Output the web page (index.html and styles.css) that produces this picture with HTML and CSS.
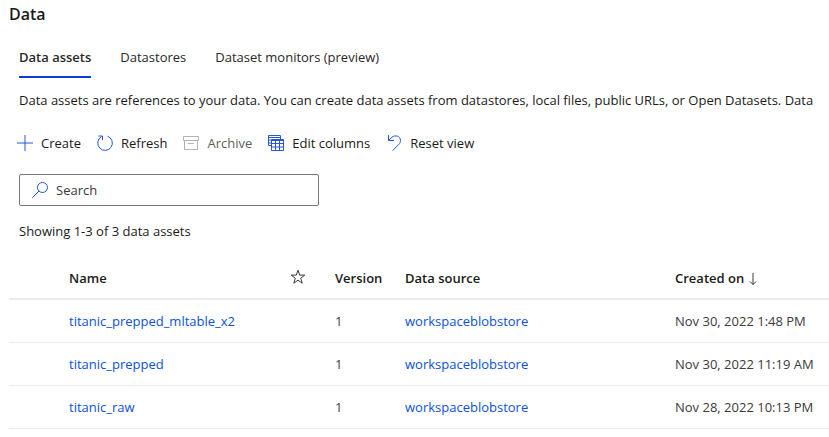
FILE: index.html
```html
<!DOCTYPE html>
<html lang="en">
<head>
	<meta charset="utf-8">
	<title>Data</title>
	<link rel="stylesheet" href="styles.css">
</head>
<body>

	<h1>Data</h1>

	<div class="content">
		<nav class="tabs">
			<a class="tab active" href="#assets">Data assets</a>
			<a class="tab" href="#datastores">Datastores</a>
			<a class="tab" href="#monitors">Dataset monitors (preview)</a>
		</nav>

		<p class="intro">Data assets are references to your data. You can create data assets from datastores, local files, public URLs, or Open Datasets. Data</p>

		<div class="toolbar">
			<button type="button">
				<svg viewBox="0 0 16 16"><path d="M8 0v16M0 8h16"/></svg>
				Create
			</button>
			<button type="button">
				<svg viewBox="0 0 16 16"><path d="M10.500 1.200A7.300 7.300 0 1 1 4.500 1.700M1.500 1h4v4"/></svg>
				Refresh
			</button>
			<button type="button" disabled>
				<svg viewBox="0 0 16 16"><path d="M.5 1.500h15v4H.5zM1.500 5.500v9h13v-9M5 8.500h6"/></svg>
				Archive
			</button>
			<button type="button">
				<svg viewBox="0 0 16 16"><path d="M3.500 10.500h-3v-10h12v4M.5 2.500h12M.5 5h3M.5 8h3M3.500 4.500h12v11h-12zM3.500 5.500h12M3.500 8.500h12M3.500 12h12M7.500 6v9.500M11.500 6v9.500"/></svg>
				Edit columns
			</button>
			<button type="button">
				<svg viewBox="0 0 16 16"><path d="M2.500 0v5.500H8M2.500 5.500L6 2.200C9-.4 14.500 1 14.500 5.500c0 1.500-.5 2.700-1.500 3.700L6.500 15.700"/></svg>
				Reset view
			</button>
		</div>

		<label class="search">
			<svg viewBox="0 0 16 16"><circle cx="10.500" cy="5.500" r="5"/><path d="M7 9L.3 15.700"/></svg>
			<input type="text" placeholder="Search" aria-label="Search">
		</label>

		<p class="count">Showing 1-3 of 3 data assets</p>
	</div>

	<table>
		<thead>
			<tr>
				<th class="name">Name</th>
				<th class="star"><svg viewBox="0 0 16 16" role="img" aria-label="Favorite"><path d="M8 1.200l1.700 4.900h5.100l-4.100 3.100 1.500 5L8 11.200l-4.200 3 1.500-5L1.200 6.100h5.100z"/></svg></th>
				<th class="version">Version</th>
				<th class="source">Data source</th>
				<th>Created on <svg class="arrow" viewBox="0 0 8 12"><path d="M4 0v11.500M1 8.500l3 3 3-3"/></svg></th>
			</tr>
		</thead>
		<tbody>
			<tr>
				<td class="name"><a href="#x2">titanic_prepped_mltable_x2</a></td>
				<td></td>
				<td>1</td>
				<td><a href="#store">workspaceblobstore</a></td>
				<td>Nov 30, 2022 1:48 PM</td>
			</tr>
			<tr>
				<td class="name"><a href="#prepped">titanic_prepped</a></td>
				<td></td>
				<td>1</td>
				<td><a href="#store">workspaceblobstore</a></td>
				<td>Nov 30, 2022 11:19 AM</td>
			</tr>
			<tr>
				<td class="name"><a href="#raw">titanic_raw</a></td>
				<td></td>
				<td>1</td>
				<td><a href="#store">workspaceblobstore</a></td>
				<td>Nov 28, 2022 10:13 PM</td>
			</tr>
		</tbody>
	</table>

</body>
</html>
```
FILE: styles.css
```css
* {box-sizing: border-box;}
body {margin: 0; padding: 4px 0 0 9px; background: white; color: #1b1a19;
		font: 13px/20px "Open Sans", "Noto Sans", sans-serif; overflow-x: hidden;}
a {color: #0b50e0; text-decoration: none;}
svg {width: 16px; height: 16px; fill: none; stroke: #2456d6; flex: none;}
h1 {margin: 0; font-size: 16px; line-height: 20px; font-weight: 600;}

.content {padding-left: 10px;}
.tabs {display: flex; gap: 29px; margin-top: 23px;}
.tab {padding-bottom: 9px; border-bottom: 2px solid transparent; color: #292827;}
.tab.active {font-weight: 600; border-color: #0b3fd6;}
.intro {margin: 12px 0 0; white-space: nowrap;}

.toolbar {display: flex; gap: 16px; height: 24px; margin: 21px 0 0 -2px;}
.toolbar button {display: flex; align-items: center; gap: 8px; padding: 0; border: 0;
		background: none; font: inherit; color: #1b1a19; white-space: nowrap;}
.toolbar button:disabled {color: #605e5c;}
.toolbar button:disabled svg {stroke: #b5b3b1;}

.search {display: flex; align-items: center; gap: 8px; width: 300px; height: 32px; margin-top: 19px;
		padding: 0 12px; border: 1px solid #7a7876; border-radius: 2px;}
.search input {flex: 1; min-width: 0; padding: 0; border: 0; outline: 0; font: inherit; background: none;}
.search input::placeholder {color: #3b3a39; opacity: 1;}
.count {margin: 15px 0 0;}

table {width: 100%; margin-top: 15px; border-collapse: collapse; table-layout: fixed;}
th, td {height: 43px; padding: 0; text-align: left; border-bottom: 1px solid #ebebeb; white-space: nowrap;}
th {padding-top: 2px; font-weight: 600; border-bottom-width: 2px;}
td {color: #3b3a39;}
th svg {display: inline-block; vertical-align: -2px; stroke: #3b3a39;}
.name {width: 281px; padding-left: 60px;}
.star {width: 45px;}
.version {width: 70px;}
.source {width: 270px;}
th .arrow {width: 8px; height: 12px; margin-left: 1px;}
```
